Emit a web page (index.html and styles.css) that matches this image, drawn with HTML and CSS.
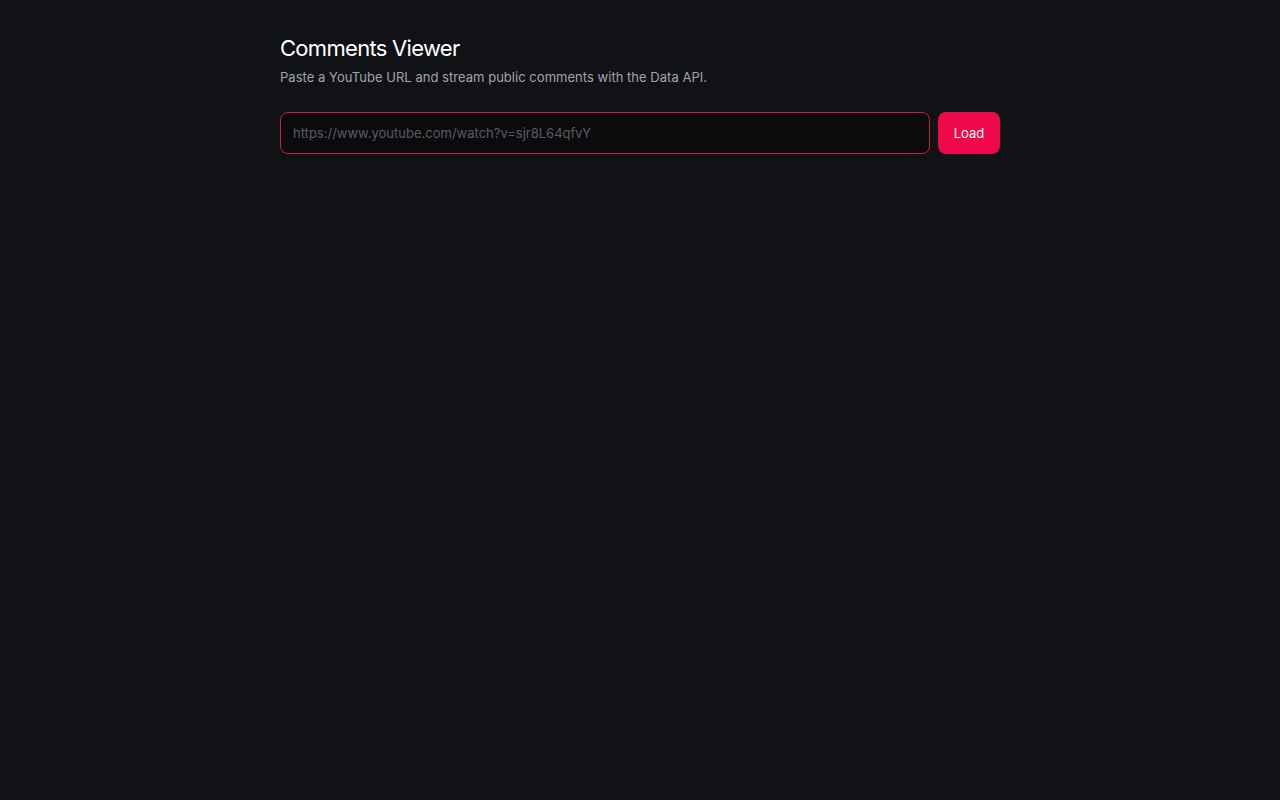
FILE: index.html
```html
<!DOCTYPE html>
<html lang="en">
<head>
<meta charset="utf-8">
<title>Comments Viewer</title>
<link rel="stylesheet" href="styles.css">
</head>
<body>
<main class="container">
  <header class="head">
    <h1 class="title">Comments Viewer</h1>
    <p class="subtitle">Paste a YouTube URL and stream public comments with the Data API.</p>
  </header>
  <form class="form">
    <input class="url" type="text" placeholder="https://www.youtube.com/watch?v=sjr8L64qfvY">
    <button class="load" type="button">Load</button>
  </form>
</main>
</body>
</html>
```
FILE: styles.css
```css
html, body {
  margin: 0;
  padding: 0;
  background: #111216;
  color: #f2f2f4;
  font-family: Inter, "Noto Sans", "Liberation Sans", sans-serif;
}
.container {
  width: 720px;
  margin: 0 auto;
  padding-top: 34px;
}
.title {
  margin: 0;
  font-size: 22px;
  font-weight: 400;
  line-height: 28px;
  letter-spacing: -0.7px;
  color: #ffffff;
}
.subtitle {
  margin: 6px 0 0;
  font-size: 13px;
  line-height: 18px;
  letter-spacing: 0.03px;
  color: #a3a4ab;
}
.form {
  display: flex;
  gap: 8px;
  margin-top: 26px;
}
.url {
  flex: 1;
  height: 42px;
  box-sizing: border-box;
  padding: 0 12px;
  border: 1px solid #c8213f;
  border-radius: 8px;
  background: #0b0b0e;
  color: #e6e6ea;
  font-family: inherit;
  font-size: 13px;
  outline: none;
}
.url::placeholder {
  color: #5a5b62;
}
.load {
  width: 62px;
  height: 42px;
  border: none;
  border-radius: 8px;
  background: #ee0a4a;
  color: #ffffff;
  font-family: inherit;
  font-size: 13px;
  cursor: pointer;
}
```
